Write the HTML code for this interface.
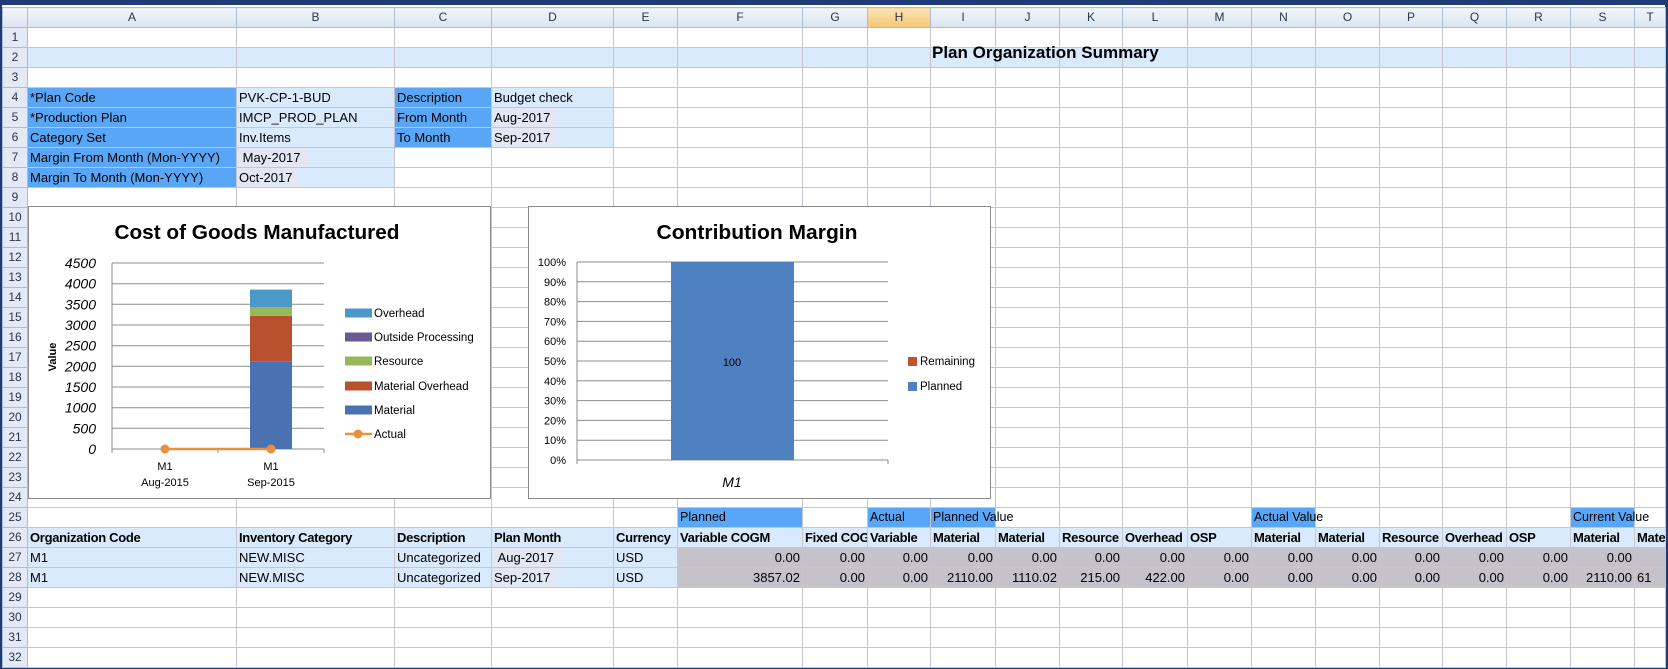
<!DOCTYPE html>
<html><head><meta charset="utf-8">
<style>
html,body{margin:0;padding:0;}
body{width:1668px;height:669px;position:relative;overflow:hidden;background:#1f3a74;font-family:"Liberation Sans",Arial,sans-serif;}
#inner{position:absolute;left:2px;top:5px;width:1663px;height:662px;background:#fff;}
table{position:absolute;left:0;top:2px;border-collapse:collapse;table-layout:fixed;width:1663px;}
td{height:19px;padding:0 2px;border:1px solid #c9c5d0;font-size:13px;white-space:nowrap;overflow:hidden;color:#000;line-height:19px;box-sizing:border-box;}
tr.h td{background:linear-gradient(#f3f6fb,#d9e3f0);border-color:#a9bdd6;text-align:center;font-size:12px;color:#27364f;}
td.rn{background:#e3eaf5;border-color:#a9bdd6;text-align:center;font-size:12px;color:#27364f;padding:0;}
tr.h td.hl{background:linear-gradient(#fbe3b4,#f5c677);}
.lb{background:#d9eafd;}
.bl{background:#5aa6f6;}
.gr{background:#c6c2ca;text-align:right;}
.bx{background:#e3e7f3;display:inline-block;padding-right:8px;}
.hd{font-weight:bold;font-size:14.5px;letter-spacing:-0.3px;}
.ov{overflow:visible;}
.sm{font-size:12.5px;}
</style></head><body>
<div id="inner">
<table>
<colgroup>
<col style="width:25px"><col style="width:209px"><col style="width:158px"><col style="width:97px"><col style="width:122px"><col style="width:64px"><col style="width:125px"><col style="width:65px"><col style="width:63px"><col style="width:65px"><col style="width:64px"><col style="width:63px"><col style="width:65px"><col style="width:64px"><col style="width:64px"><col style="width:64px"><col style="width:63px"><col style="width:64px"><col style="width:64px"><col style="width:64px"><col style="width:31px">
</colgroup>
<tr class="h"><td></td><td>A</td><td>B</td><td>C</td><td>D</td><td>E</td><td>F</td><td>G</td><td class="hl">H</td><td>I</td><td>J</td><td>K</td><td>L</td><td>M</td><td>N</td><td>O</td><td>P</td><td>Q</td><td>R</td><td>S</td><td>T</td></tr>
<tr><td class="rn">1</td><td></td><td></td><td></td><td></td><td></td><td></td><td></td><td></td><td></td><td></td><td></td><td></td><td></td><td></td><td></td><td></td><td></td><td></td><td></td><td></td></tr>
<tr><td class="rn">2</td><td class="lb"></td><td class="lb"></td><td class="lb"></td><td class="lb"></td><td class="lb"></td><td class="lb"></td><td class="lb"></td><td class="lb"></td><td class="lb"></td><td class="lb"></td><td class="lb"></td><td class="lb"></td><td class="lb"></td><td class="lb"></td><td class="lb"></td><td class="lb"></td><td class="lb"></td><td class="lb"></td><td class="lb"></td><td class="lb"></td></tr>
<tr><td class="rn">3</td><td></td><td></td><td></td><td></td><td></td><td></td><td></td><td></td><td></td><td></td><td></td><td></td><td></td><td></td><td></td><td></td><td></td><td></td><td></td><td></td></tr>
<tr><td class="rn">4</td><td class="bl">*Plan Code</td><td class="lb">PVK-CP-1-BUD</td><td class="bl">Description</td><td class="lb">Budget check</td><td></td><td></td><td></td><td></td><td></td><td></td><td></td><td></td><td></td><td></td><td></td><td></td><td></td><td></td><td></td><td></td></tr>
<tr><td class="rn">5</td><td class="bl">*Production Plan</td><td class="lb">IMCP_PROD_PLAN</td><td class="bl">From Month</td><td class="lb"><span class="bx">Aug-2017</span></td><td></td><td></td><td></td><td></td><td></td><td></td><td></td><td></td><td></td><td></td><td></td><td></td><td></td><td></td><td></td><td></td></tr>
<tr><td class="rn">6</td><td class="bl">Category Set</td><td class="lb">Inv.Items</td><td class="bl">To Month</td><td class="lb"><span class="bx">Sep-2017</span></td><td></td><td></td><td></td><td></td><td></td><td></td><td></td><td></td><td></td><td></td><td></td><td></td><td></td><td></td><td></td><td></td></tr>
<tr><td class="rn">7</td><td class="bl">Margin From Month (Mon-YYYY)</td><td class="lb"><span class="bx">&nbsp;May-2017</span></td><td></td><td></td><td></td><td></td><td></td><td></td><td></td><td></td><td></td><td></td><td></td><td></td><td></td><td></td><td></td><td></td><td></td><td></td></tr>
<tr><td class="rn">8</td><td class="bl">Margin To Month (Mon-YYYY)</td><td class="lb"><span class="bx">Oct-2017</span></td><td></td><td></td><td></td><td></td><td></td><td></td><td></td><td></td><td></td><td></td><td></td><td></td><td></td><td></td><td></td><td></td><td></td><td></td></tr>
<tr><td class="rn">9</td><td></td><td></td><td></td><td></td><td></td><td></td><td></td><td></td><td></td><td></td><td></td><td></td><td></td><td></td><td></td><td></td><td></td><td></td><td></td><td></td></tr>
<tr><td class="rn">10</td><td></td><td></td><td></td><td></td><td></td><td></td><td></td><td></td><td></td><td></td><td></td><td></td><td></td><td></td><td></td><td></td><td></td><td></td><td></td><td></td></tr>
<tr><td class="rn">11</td><td></td><td></td><td></td><td></td><td></td><td></td><td></td><td></td><td></td><td></td><td></td><td></td><td></td><td></td><td></td><td></td><td></td><td></td><td></td><td></td></tr>
<tr><td class="rn">12</td><td></td><td></td><td></td><td></td><td></td><td></td><td></td><td></td><td></td><td></td><td></td><td></td><td></td><td></td><td></td><td></td><td></td><td></td><td></td><td></td></tr>
<tr><td class="rn">13</td><td></td><td></td><td></td><td></td><td></td><td></td><td></td><td></td><td></td><td></td><td></td><td></td><td></td><td></td><td></td><td></td><td></td><td></td><td></td><td></td></tr>
<tr><td class="rn">14</td><td></td><td></td><td></td><td></td><td></td><td></td><td></td><td></td><td></td><td></td><td></td><td></td><td></td><td></td><td></td><td></td><td></td><td></td><td></td><td></td></tr>
<tr><td class="rn">15</td><td></td><td></td><td></td><td></td><td></td><td></td><td></td><td></td><td></td><td></td><td></td><td></td><td></td><td></td><td></td><td></td><td></td><td></td><td></td><td></td></tr>
<tr><td class="rn">16</td><td></td><td></td><td></td><td></td><td></td><td></td><td></td><td></td><td></td><td></td><td></td><td></td><td></td><td></td><td></td><td></td><td></td><td></td><td></td><td></td></tr>
<tr><td class="rn">17</td><td></td><td></td><td></td><td></td><td></td><td></td><td></td><td></td><td></td><td></td><td></td><td></td><td></td><td></td><td></td><td></td><td></td><td></td><td></td><td></td></tr>
<tr><td class="rn">18</td><td></td><td></td><td></td><td></td><td></td><td></td><td></td><td></td><td></td><td></td><td></td><td></td><td></td><td></td><td></td><td></td><td></td><td></td><td></td><td></td></tr>
<tr><td class="rn">19</td><td></td><td></td><td></td><td></td><td></td><td></td><td></td><td></td><td></td><td></td><td></td><td></td><td></td><td></td><td></td><td></td><td></td><td></td><td></td><td></td></tr>
<tr><td class="rn">20</td><td></td><td></td><td></td><td></td><td></td><td></td><td></td><td></td><td></td><td></td><td></td><td></td><td></td><td></td><td></td><td></td><td></td><td></td><td></td><td></td></tr>
<tr><td class="rn">21</td><td></td><td></td><td></td><td></td><td></td><td></td><td></td><td></td><td></td><td></td><td></td><td></td><td></td><td></td><td></td><td></td><td></td><td></td><td></td><td></td></tr>
<tr><td class="rn">22</td><td></td><td></td><td></td><td></td><td></td><td></td><td></td><td></td><td></td><td></td><td></td><td></td><td></td><td></td><td></td><td></td><td></td><td></td><td></td><td></td></tr>
<tr><td class="rn">23</td><td></td><td></td><td></td><td></td><td></td><td></td><td></td><td></td><td></td><td></td><td></td><td></td><td></td><td></td><td></td><td></td><td></td><td></td><td></td><td></td></tr>
<tr><td class="rn">24</td><td></td><td></td><td></td><td></td><td></td><td></td><td></td><td></td><td></td><td></td><td></td><td></td><td></td><td></td><td></td><td></td><td></td><td></td><td></td><td></td></tr>
<tr><td class="rn">25</td><td></td><td></td><td></td><td></td><td></td><td class="bl sm">Planned</td><td></td><td class="bl sm">Actual</td><td class="bl sm ov">Planned Value</td><td></td><td></td><td></td><td></td><td class="bl sm ov">Actual Value</td><td></td><td></td><td></td><td></td><td class="bl sm ov">Current Value</td><td></td></tr>
<tr class="hd"><td class="rn" style="font-weight:normal;font-size:12px;letter-spacing:0">26</td><td class="lb">Organization Code</td><td class="lb">Inventory Category</td><td class="lb">Description</td><td class="lb">Plan Month</td><td class="lb">Currency</td><td class="lb">Variable COGM</td><td class="lb">Fixed COGM</td><td class="lb">Variable</td><td class="lb">Material</td><td class="lb">Material</td><td class="lb">Resource</td><td class="lb">Overhead</td><td class="lb">OSP</td><td class="lb">Material</td><td class="lb">Material</td><td class="lb">Resource</td><td class="lb">Overhead</td><td class="lb">OSP</td><td class="lb">Material</td><td class="lb">Material</td></tr>
<tr><td class="rn">27</td><td class="lb">M1</td><td class="lb">NEW.MISC</td><td class="lb">Uncategorized</td><td class="lb"><span class="bx">&nbsp;Aug-2017</span></td><td class="lb">USD</td><td class="gr">0.00</td><td class="gr">0.00</td><td class="gr">0.00</td><td class="gr">0.00</td><td class="gr">0.00</td><td class="gr">0.00</td><td class="gr">0.00</td><td class="gr">0.00</td><td class="gr">0.00</td><td class="gr">0.00</td><td class="gr">0.00</td><td class="gr">0.00</td><td class="gr">0.00</td><td class="gr">0.00</td><td class="gr"></td></tr>
<tr><td class="rn">28</td><td class="lb">M1</td><td class="lb">NEW.MISC</td><td class="lb">Uncategorized</td><td class="lb"><span class="bx">Sep-2017</span></td><td class="lb">USD</td><td class="gr">3857.02</td><td class="gr">0.00</td><td class="gr">0.00</td><td class="gr">2110.00</td><td class="gr">1110.02</td><td class="gr">215.00</td><td class="gr">422.00</td><td class="gr">0.00</td><td class="gr">0.00</td><td class="gr">0.00</td><td class="gr">0.00</td><td class="gr">0.00</td><td class="gr">0.00</td><td class="gr">2110.00</td><td class="gr" style="text-align:left">61</td></tr>
<tr><td class="rn">29</td><td></td><td></td><td></td><td></td><td></td><td></td><td></td><td></td><td></td><td></td><td></td><td></td><td></td><td></td><td></td><td></td><td></td><td></td><td></td><td></td></tr>
<tr><td class="rn">30</td><td></td><td></td><td></td><td></td><td></td><td></td><td></td><td></td><td></td><td></td><td></td><td></td><td></td><td></td><td></td><td></td><td></td><td></td><td></td><td></td></tr>
<tr><td class="rn">31</td><td></td><td></td><td></td><td></td><td></td><td></td><td></td><td></td><td></td><td></td><td></td><td></td><td></td><td></td><td></td><td></td><td></td><td></td><td></td><td></td></tr>
<tr><td class="rn">32</td><td></td><td></td><td></td><td></td><td></td><td></td><td></td><td></td><td></td><td></td><td></td><td></td><td></td><td></td><td></td><td></td><td></td><td></td><td></td><td></td></tr>
</table>
</div>
<div style="position:absolute;left:932px;top:43px;font-weight:bold;font-size:17px;line-height:20px;">Plan Organization Summary</div>

<svg style="position:absolute;left:28px;top:206px" width="464" height="294" font-family="Liberation Sans, Arial, sans-serif">
<rect x="0.5" y="0.5" width="462" height="292" fill="#fff" stroke="#8a8a8a"/>
<text x="229" y="33" text-anchor="middle" font-size="20" font-weight="bold" textLength="285" lengthAdjust="spacingAndGlyphs">Cost of Goods Manufactured</text>
<g stroke="#8c8c8c" stroke-width="1">
<line x1="84" y1="57" x2="296" y2="57"/><line x1="84" y1="77.7" x2="296" y2="77.7"/><line x1="84" y1="98.3" x2="296" y2="98.3"/><line x1="84" y1="119" x2="296" y2="119"/><line x1="84" y1="139.7" x2="296" y2="139.7"/><line x1="84" y1="160.3" x2="296" y2="160.3"/><line x1="84" y1="181" x2="296" y2="181"/><line x1="84" y1="201.7" x2="296" y2="201.7"/><line x1="84" y1="222.3" x2="296" y2="222.3"/><line x1="84" y1="243" x2="296" y2="243"/>
<line x1="84" y1="57" x2="84" y2="247"/><line x1="190" y1="243" x2="190" y2="247"/><line x1="296" y1="243" x2="296" y2="247"/>
</g>
<g font-size="14" font-style="italic" text-anchor="end">
<text x="68" y="62">4500</text><text x="68" y="82.7">4000</text><text x="68" y="103.3">3500</text><text x="68" y="124">3000</text><text x="68" y="144.7">2500</text><text x="68" y="165.3">2000</text><text x="68" y="186">1500</text><text x="68" y="206.7">1000</text><text x="68" y="227.3">500</text><text x="68" y="248">0</text>
</g>
<text transform="translate(28,151) rotate(-90)" text-anchor="middle" font-size="11" font-weight="bold">Value</text>
<rect x="222" y="155.8" width="42" height="87.2" fill="#4a72b2"/>
<rect x="222" y="109.9" width="42" height="45.9" fill="#b9502e"/>
<rect x="222" y="101" width="42" height="8.9" fill="#94b85a"/>
<rect x="222" y="83.6" width="42" height="17.4" fill="#4b98c9"/>
<line x1="137" y1="243" x2="243" y2="243" stroke="#e8903c" stroke-width="2.5"/>
<circle cx="137" cy="243" r="4.5" fill="#e8903c"/><circle cx="243" cy="243" r="4.5" fill="#e8903c"/>
<g font-size="11" text-anchor="middle"><text x="137" y="264">M1</text><text x="137" y="280">Aug-2015</text><text x="243" y="264">M1</text><text x="243" y="280">Sep-2015</text></g>
<rect x="317" y="102.5" width="27" height="9" fill="#4b98c9"/>
<rect x="317" y="126.5" width="27" height="9" fill="#6a5a94"/>
<rect x="317" y="150.5" width="27" height="9" fill="#94b85a"/>
<rect x="317" y="175.5" width="27" height="9" fill="#b9502e"/>
<rect x="317" y="199.5" width="27" height="9" fill="#4a72b2"/>
<line x1="317" y1="228" x2="344" y2="228" stroke="#e8903c" stroke-width="2.5"/><circle cx="330" cy="228" r="4.5" fill="#e8903c"/>
<g font-size="11.5"><text x="346" y="111">Overhead</text><text x="346" y="135">Outside Processing</text><text x="346" y="159">Resource</text><text x="346" y="184">Material Overhead</text><text x="346" y="208">Material</text><text x="346" y="232">Actual</text></g>
</svg>

<svg style="position:absolute;left:528px;top:206px" width="464" height="294" font-family="Liberation Sans, Arial, sans-serif">
<rect x="0.5" y="0.5" width="462" height="292" fill="#fff" stroke="#8a8a8a"/>
<text x="229" y="33" text-anchor="middle" font-size="20" font-weight="bold" textLength="201" lengthAdjust="spacingAndGlyphs">Contribution Margin</text>
<g stroke="#8c8c8c" stroke-width="1">
<line x1="49" y1="56" x2="360" y2="56"/><line x1="49" y1="75.8" x2="360" y2="75.8"/><line x1="49" y1="95.6" x2="360" y2="95.6"/><line x1="49" y1="115.4" x2="360" y2="115.4"/><line x1="49" y1="135.2" x2="360" y2="135.2"/><line x1="49" y1="155" x2="360" y2="155"/><line x1="49" y1="174.8" x2="360" y2="174.8"/><line x1="49" y1="194.6" x2="360" y2="194.6"/><line x1="49" y1="214.4" x2="360" y2="214.4"/><line x1="49" y1="234.2" x2="360" y2="234.2"/><line x1="49" y1="254" x2="360" y2="254"/>
<line x1="49" y1="56" x2="49" y2="258"/><line x1="360" y1="254" x2="360" y2="258"/>
</g>
<g font-size="11" text-anchor="end">
<text x="38" y="60">100%</text><text x="38" y="79.8">90%</text><text x="38" y="99.6">80%</text><text x="38" y="119.4">70%</text><text x="38" y="139.2">60%</text><text x="38" y="159">50%</text><text x="38" y="178.8">40%</text><text x="38" y="198.6">30%</text><text x="38" y="218.4">20%</text><text x="38" y="238.2">10%</text><text x="38" y="258">0%</text>
</g>
<rect x="143" y="56" width="123" height="198" fill="#4f80c0"/>
<text x="204" y="160" font-size="11" text-anchor="middle">100</text>
<text x="204" y="281" font-size="14" font-style="italic" text-anchor="middle">M1</text>
<rect x="380" y="151" width="9" height="9" fill="#c0522e"/><rect x="380" y="176" width="9" height="9" fill="#4f80c0"/>
<g font-size="11.5"><text x="392" y="159">Remaining</text><text x="392" y="184">Planned</text></g>
</svg>
</body></html>
